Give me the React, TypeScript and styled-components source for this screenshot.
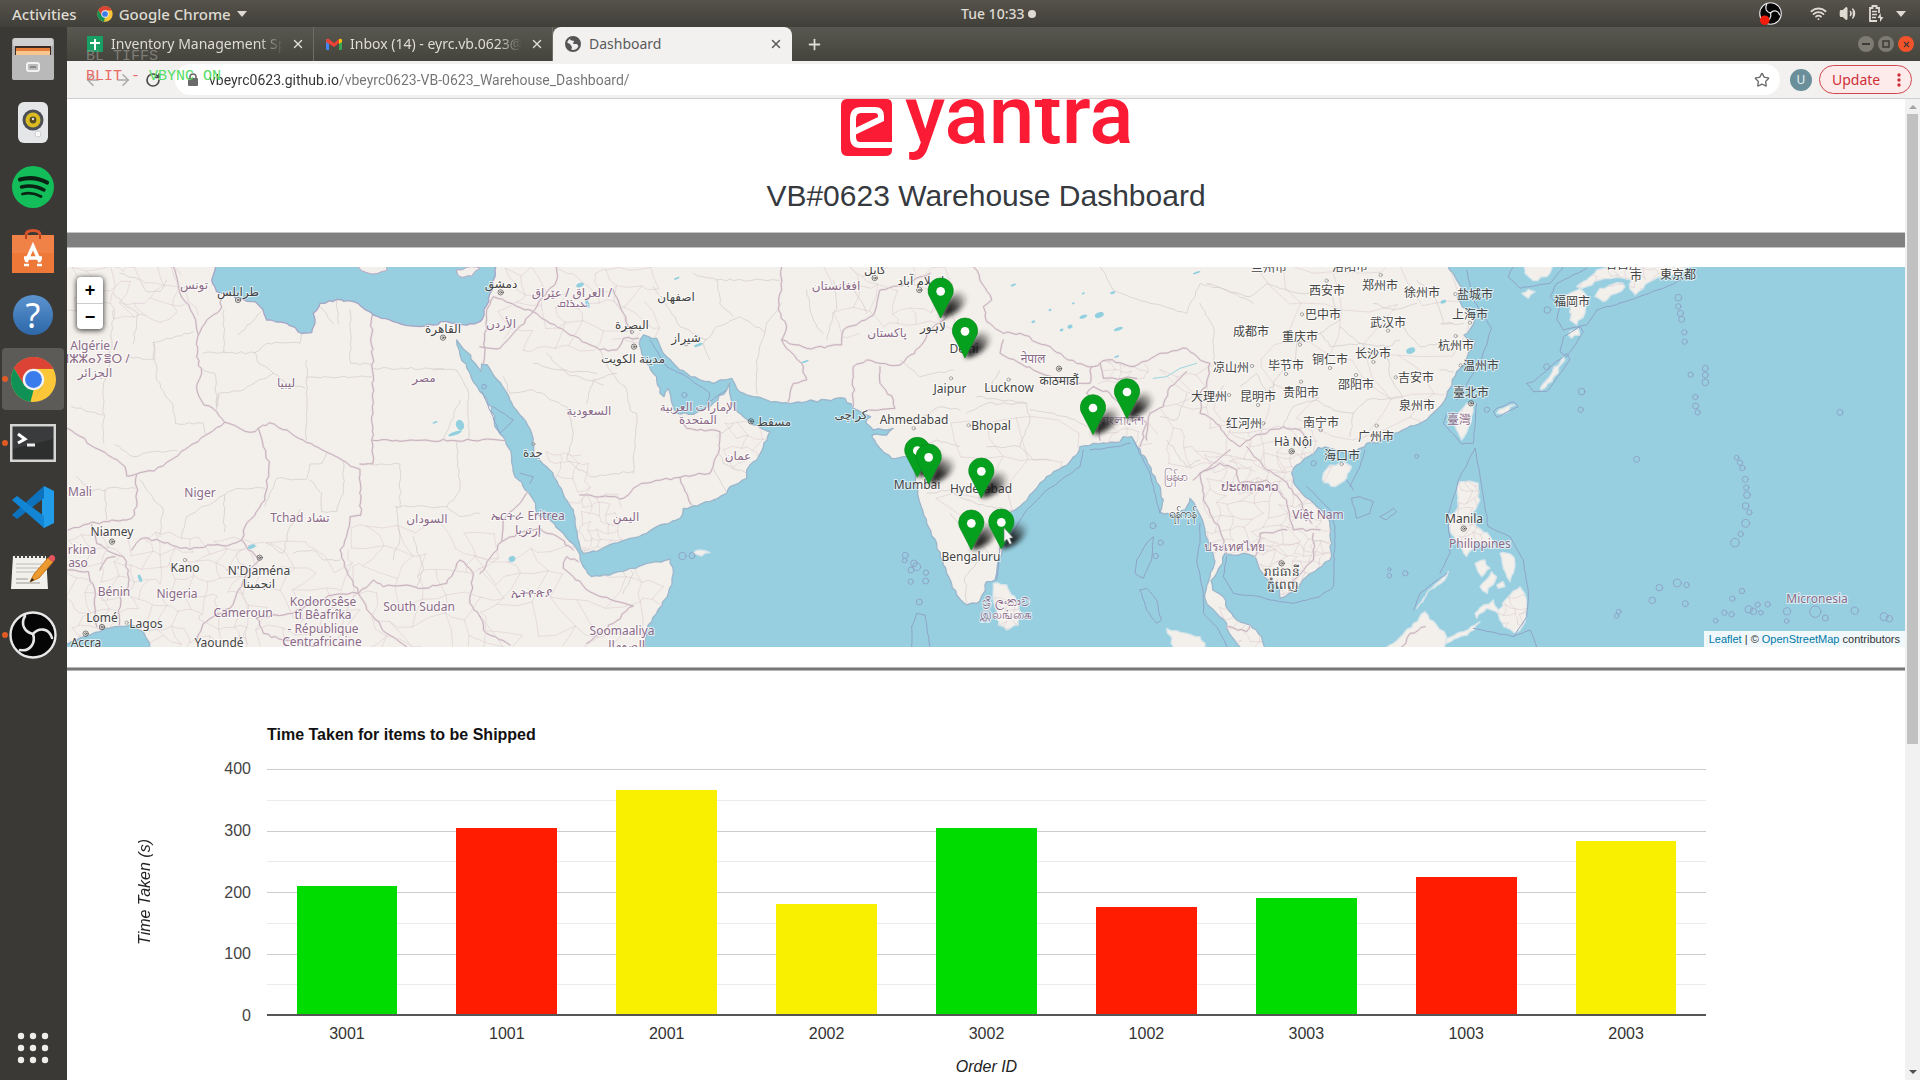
import React from 'react';
import styled, { createGlobalStyle, css } from 'styled-components';
import { RotateCw, ArrowLeft, ArrowRight, Star, X, Plus, Volume2, Wifi } from 'lucide-react';

const GlobalStyle = createGlobalStyle`
  * { box-sizing: border-box; }
  body { margin: 0; background: #fff; font-family: "Liberation Sans", Arial, sans-serif; }
  button { font: inherit; border: 0; padding: 0; background: none; color: inherit; cursor: pointer; }
  svg { display: block; flex: none; }
`;

const uiFont = '"Noto Sans", "Open Sans", sans-serif';

/* ---------- desktop ---------- */

const Desktop = styled.div`
  display: flex;
  flex-direction: column;
  height: 100vh;
  overflow: hidden;
`;

const Panel = styled.header`
  display: flex;
  align-items: center;
  height: 27px;
  flex: none;
  padding-right: 14px;
  background: linear-gradient(#56534b, #403f39);
  color: #dfdbd2;
  font: 500 15px/20px ${uiFont};
`;

const PanelLeft = styled.div`
  display: flex;
  align-items: center;
  gap: 20px;
  width: 50%;
  padding-left: 12px;
`;

const PanelItem = styled.button`
  display: flex;
  align-items: center;
  gap: 6px;
`;

const Clock = styled(PanelItem)`
  gap: 4px;
  padding-left: 8px;
  font-size: 14px;
`;

const PanelStatus = styled.div`
  display: flex;
  align-items: center;
  gap: 12px;
  margin-left: auto;
`;

const RecordingSlot = styled.div`
  margin-right: 16px;
`;

const ClockDot = styled.span`
  width: 8px;
  height: 8px;
  border-radius: 50%;
  background: #dfdbd2;
`;

const Caret = styled.span`
  width: 0;
  border: 5px solid transparent;
  border-top: 6px solid #dfdbd2;
  border-bottom: 0;
`;

const Workspace = styled.div`
  display: flex;
  flex: 1;
  min-height: 0;
`;

const Dock = styled.nav`
  display: flex;
  flex-direction: column;
  width: 67px;
  flex: none;
  background: #3a3936;
`;

const DockButton = styled.button<{ $active?: boolean; $running?: boolean }>`
  display: grid;
  place-items: center;
  position: relative;
  height: 62px;
  margin: 1px 3px 1px 2px;
  border-radius: 4px;
  background: ${p => (p.$active ? '#5c5b58' : 'transparent')};
  ${p => p.$running && css`
    &::before {
      content: '';
      position: absolute;
      left: 0;
      top: 28px;
      width: 6px;
      height: 6px;
      border-radius: 50%;
      background: #e05a26;
    }
  `}
`;

const AppsButton = styled(DockButton)`
  margin-top: auto;
`;

/* ---------- browser ---------- */

const Browser = styled.div`
  display: flex;
  flex-direction: column;
  flex: 1;
  min-width: 0;
  position: relative;
`;

const TabStrip = styled.div`
  display: flex;
  align-items: stretch;
  height: 34px;
  flex: none;
  padding: 0 6px 0 8px;
  background: linear-gradient(#595850, #44433c);
  color: #dedcd5;
  font: 14px/34px ${uiFont};
`;

const Tab = styled.div<{ $active?: boolean }>`
  display: flex;
  align-items: center;
  gap: 8px;
  width: 239px;
  padding: 0 8px 0 12px;
  border-right: 1px solid ${p => (p.$active ? 'transparent' : '#6f6e66')};
  ${p => p.$active && css`
    background: #f2f1f0;
    color: #5a5a5a;
    border-radius: 8px 8px 0 0;
  `}
`;

const TabTitle = styled.button<{ $fade?: boolean }>`
  flex: 1;
  min-width: 0;
  overflow: hidden;
  white-space: nowrap;
  text-align: left;
  ${p => p.$fade && css`mask-image: linear-gradient(90deg, #000 86%, transparent);`}
`;

const NewTab = styled.button`
  display: grid;
  place-items: center;
  width: 44px;
`;

const WindowButtons = styled.div`
  display: flex;
  align-items: center;
  gap: 4px;
  margin-left: auto;
`;

const WindowButton = styled.button<{ $close?: boolean }>`
  display: grid;
  place-items: center;
  width: 16px;
  height: 16px;
  border-radius: 50%;
  color: #3c3b37;
  background: ${p => (p.$close ? '#f2532a' : '#7d7b72')};
`;

const Toolbar = styled.div`
  display: flex;
  align-items: center;
  height: 38px;
  flex: none;
  padding: 0 8px 0 11px;
  background: #f2f1f0;
  border-bottom: 1px solid #cfcfcf;
`;

const NavButton = styled.button<{ $dim?: boolean }>`
  display: grid;
  place-items: center;
  width: 30px;
  height: 28px;
  color: ${p => (p.$dim ? '#a8a8a8' : '#4a4a4a')};
`;

const Omnibox = styled.label`
  display: flex;
  align-items: center;
  gap: 10px;
  flex: 1;
  height: 31px;
  margin: 0 10px 0 7px;
  padding: 0 10px 0 12px;
  border-radius: 16px;
  background: #fff;
  color: #6a6a6a;
`;

const Address = styled.input`
  flex: 1;
  min-width: 0;
  border: 0;
  outline: 0;
  padding: 0;
  color: #666;
  font: 14px/24px Roboto, ${uiFont};
  background: linear-gradient(90deg, #333 0 129px, #737373 129px);
  background-clip: text;
  -webkit-text-fill-color: transparent;
`;

const Avatar = styled.button`
  width: 22px;
  height: 22px;
  border-radius: 50%;
  background: #6a8f9b;
  color: #e8f0f2;
  font: 12px/22px ${uiFont};
`;

const UpdateButton = styled.button`
  display: flex;
  align-items: center;
  justify-content: space-between;
  width: 93px;
  height: 29px;
  margin-left: 7px;
  padding: 0 10px 0 12px;
  border: 1px solid #d0474e;
  border-radius: 15px;
  background: #fcebea;
  color: #cf2f38;
  font: 14px/24px ${uiFont};
`;

const DebugOverlay = styled.div`
  position: absolute;
  left: 19px;
  top: 20px;
  white-space: pre;
  pointer-events: none;
  font: 15px/20px "Liberation Mono", monospace;
`;

const DebugLine = styled.div<{ $color: string }>`
  color: ${p => p.$color};
`;

const DebugGreen = styled.span`
  color: #55dd66;
`;

const Viewport = styled.div`
  display: flex;
  flex: 1;
  min-height: 0;
`;

const Scrollbar = styled.div`
  display: flex;
  flex-direction: column;
  align-items: center;
  justify-content: space-between;
  width: 15px;
  flex: none;
  padding: 6px 0;
  background: #f1f1f1;
`;

const ScrollThumb = styled.div`
  width: 11px;
  flex: 0 0 65%;
  margin: 5px 0 auto;
  background: #c1c1c1;
`;

const ScrollArrow = styled.span<{ $down?: boolean }>`
  width: 0;
  border: 4px solid transparent;
  ${p => (p.$down ? 'border-top-color: #505050; border-bottom: 0;' : 'border-bottom-color: #a3a3a3; border-top: 0;')}
`;

/* ---------- dashboard ---------- */

const Main = styled.main`
  flex: 1;
  min-width: 0;
  overflow: hidden;
  background: #fff;
`;

const PageHead = styled.div`
  display: flex;
  flex-direction: column;
  align-items: center;
`;

const Title = styled.h1`
  margin: 19px 0 16px;
  color: #363a3f;
  font: 400 30px/40px "Liberation Sans", Arial, sans-serif;
`;

const Band = styled.div`
  height: 16px;
  background: #808080;
  border: solid #c4c4c4;
  border-width: 1px 0;
`;

const MapFrame = styled.section`
  position: relative;
  height: 380px;
  margin: 19px 0 20px;
  overflow: hidden;
`;

const MapSvg = styled.svg`
  width: 100%;
  height: 380px;
`;

const ZoomControl = styled.div`
  position: absolute;
  left: 10px;
  top: 10px;
  display: flex;
  flex-direction: column;
  width: 26px;
  border-radius: 4px;
  background: #fff;
  box-shadow: 0 1px 5px 1px rgba(0, 0, 0, 0.65);
`;

const ZoomButton = styled.button`
  height: 26px;
  color: #000;
  font: 700 18px/26px "Liberation Sans", Arial, sans-serif;
  & + & { border-top: 1px solid #ccc; }
`;

const Attribution = styled.div`
  position: absolute;
  right: 0;
  bottom: 0;
  padding: 0 5px;
  background: rgba(255, 255, 255, 0.85);
  color: #333;
  font: 11px/16px "Liberation Sans", Arial, sans-serif;
`;

const MapLink = styled.a`
  color: #0078a8;
  text-decoration: none;
`;

const Rule = styled.hr`
  height: 4px;
  margin: 0;
  border: solid #b5b5b5;
  border-width: 1px 0;
  background: #777;
`;

const ChartCard = styled.section`
  display: grid;
  grid-template-columns: 68px 20px 1fr;
  padding: 54px 199px 0 0;
  font: 16px/20px "Liberation Sans", Arial, sans-serif;
  color: #444;
`;

const ChartTitle = styled.h2`
  grid-column: 3;
  margin: 0 0 24px 112px;
  color: #111;
  font: 700 16px/20px "Liberation Sans", Arial, sans-serif;
`;

const AxisY = styled.div`
  grid-column: 2;
  display: grid;
  place-items: center;
  height: 247px;
  writing-mode: vertical-rl;
  transform: rotate(180deg);
  font-style: italic;
  color: #222;
`;

const Scale = styled.div`
  grid-column: 3;
  display: grid;
  grid-template-columns: 96px 1fr;
  column-gap: 16px;
`;

const Ticks = styled.div`
  grid-area: 1 / 1;
  display: flex;
  flex-direction: column;
  justify-content: space-between;
  margin: -10px 0;
  text-align: right;
`;

const GridLines = styled.div`
  grid-area: 1 / 2;
  display: flex;
  flex-direction: column;
  justify-content: space-between;
  height: 247px;
`;

const GridLine = styled.div<{ $minor?: boolean }>`
  height: 1px;
  background: ${p => (p.$minor ? '#ebebeb' : '#ccc')};
`;

const Bars = styled.div`
  grid-area: 1 / 2;
  display: flex;
  align-items: flex-end;
  height: 247px;
  border-bottom: 2px solid #555;
`;

const BarSlot = styled.div`
  display: flex;
  align-items: flex-end;
  justify-content: center;
  flex: 1;
  height: 100%;
`;

const Bar = styled.div`
  width: 63%;
`;

const Categories = styled.div`
  grid-area: 2 / 2;
  display: flex;
  padding-top: 8px;
`;

const Category = styled.span`
  flex: 1;
  text-align: center;
  color: #333;
`;

const AxisX = styled.div`
  grid-area: 3 / 2;
  padding-top: 13px;
  text-align: center;
  font-style: italic;
  color: #222;
`;

/* ---------- chart data ---------- */

const GREEN = '#00db00';
const RED = '#ff1c00';
const YELLOW = '#f9f000';

const orders = [
  { id: '3001', seconds: 209, color: GREEN },
  { id: '1001', seconds: 303, color: RED },
  { id: '2001', seconds: 366, color: YELLOW },
  { id: '2002', seconds: 180, color: YELLOW },
  { id: '3002', seconds: 304, color: GREEN },
  { id: '1002', seconds: 175, color: RED },
  { id: '3003', seconds: 190, color: GREEN },
  { id: '1003', seconds: 223, color: RED },
  { id: '2003', seconds: 283, color: YELLOW },
];

/* ---------- map data: three units to a pixel ---------- */

type Pt = [number, number];

const parse = (s: string): Pt[] => s.trim().split(/\s+/).map(p => p.split(',').map(Number) as Pt);

const random = (seed: number) => () => {
  seed = (seed * 1664525 + 1013904223) % 4294967296;
  return seed / 4294967296 - 0.5;
};

/* Breaks long segments and nudges the new points, as a surveyed line would wander. */
const wander = (points: string, amount: number, closed = false) => {
  const pts = parse(points);
  const rnd = random(pts[0][0] * 31 + pts[0][1]);
  const out: Pt[] = [];
  const count = closed ? pts.length : pts.length - 1;
  for (let i = 0; i < count; i++) {
    const a = pts[i];
    const b = pts[(i + 1) % pts.length];
    const len = Math.hypot(b[0] - a[0], b[1] - a[1]);
    const n = len > 700 ? 1 : Math.max(1, Math.round(len / 14));
    for (let k = 0; k < n; k++) {
      const t = k / n;
      const j = k === 0 ? 0 : amount;
      out.push([a[0] + (b[0] - a[0]) * t + rnd() * j, a[1] + (b[1] - a[1]) * t + rnd() * j]);
    }
  }
  if (!closed) out.push(pts[pts.length - 1]);
  return 'M' + out.map(p => p.map(v => v.toFixed(0)).join(' ')).join('L') + (closed ? 'Z' : '');
};

/* A net of irregular cells for densely divided countries. */
const cells = (x: number, y: number, w: number, h: number, size: number) => {
  const rnd = random(x + y * 7);
  const cols = Math.ceil(w / size);
  const rows = Math.ceil(h / size);
  const pt: Pt[][] = [];
  for (let r = 0; r <= rows; r++) {
    pt.push([]);
    for (let c = 0; c <= cols; c++) {
      pt[r].push([x + c * size + rnd() * size * 0.7 + (r % 2 ? size / 2 : 0), y + r * size + rnd() * size * 0.7]);
    }
  }
  let d = '';
  const seg = (a: Pt, b: Pt) => {
    const m: Pt = [(a[0] + b[0]) / 2 + rnd() * size * 0.35, (a[1] + b[1]) / 2 + rnd() * size * 0.35];
    d += `M${a[0].toFixed(0)} ${a[1].toFixed(0)}L${m[0].toFixed(0)} ${m[1].toFixed(0)}L${b[0].toFixed(0)} ${b[1].toFixed(0)}`;
  };
  for (let r = 0; r <= rows; r++) {
    for (let c = 0; c <= cols; c++) {
      if (c < cols && (r + c) % 5 !== 4) seg(pt[r][c], pt[r][c + 1]);
      if (r < rows && (r * 3 + c) % 4 !== 3) seg(pt[r][c], pt[r + 1][c]);
    }
  }
  return d;
};

const mainland = `190,0 4335,0 4365,50 4388,95 4372,115 4400,150 4425,175 4412,205 4392,225 4425,245 4402,290 4392,315 4370,335 4356,375 4340,410 4312,448 4270,485 4220,505 4180,520 4140,545 4100,550 4070,575 4030,578 3990,565 3955,562 3925,590 3890,615 3875,640 3880,665 3910,705 3950,740 3980,770 3990,800 3995,850 3990,900 3955,925 3920,950 3890,985 3855,1010 3840,1015 3840,985 3805,960 3780,930 3765,890 3730,880 3695,885 3675,880 3668,910 3650,940 3633,962 3638,990 3670,1010 3685,1050 3710,1080 3750,1095 3785,1130 3797,1175 3730,1175 3695,1130 3680,1090 3650,1060 3620,1030 3615,1000 3630,950 3645,905 3625,860 3615,810 3600,765 3585,735 3570,715 3555,750 3520,765 3480,755 3490,720 3480,680 3455,640 3440,600 3410,560 3395,530 3370,530 3360,545 3320,550 3280,550 3240,560 3230,585 3190,620 3140,650 3110,685 3070,730 3045,750 3015,768 3003,800 3010,860 2995,900 2990,940 2985,960 2960,965 2950,1000 2930,1030 2900,1035 2882,1020 2870,1005 2840,940 2810,850 2780,790 2760,730 2745,670 2750,610 2735,585 2710,590 2675,595 2645,570 2615,530 2622,522 2660,525 2680,505 2650,510 2620,510 2597,488 2612,470 2590,460 2560,445 2535,415 2480,420 2420,425 2360,428 2300,420 2240,405 2210,385 2195,355 2160,360 2140,370 2100,360 2060,340 2030,320 2000,290 1970,235 1930,225 1920,240 1925,280 1940,310 1970,350 1980,400 1992,410 2005,385 2018,435 2030,460 2080,463 2130,440 2180,390 2190,368 2196,430 2212,455 2250,485 2310,515 2290,560 2270,600 2240,630 2240,655 2190,680 2180,700 2130,725 2050,745 2040,775 1980,795 1940,820 1890,835 1840,850 1790,875 1750,880 1740,860 1725,790 1720,750 1695,715 1675,675 1640,620 1605,590 1595,520 1570,475 1540,440 1515,390 1480,345 1462,315 1445,312 1442,335 1425,310 1400,275 1370,240 1380,285 1410,340 1440,395 1475,440 1485,500 1515,540 1535,590 1545,650 1570,680 1600,720 1610,760 1650,780 1690,820 1725,860 1740,885 1750,920 1775,950 1830,945 1880,930 1940,910 2010,897 2020,940 2005,1000 1970,1060 1940,1110 1930,1175 455,1175 430,1115 390,1095 345,1100 300,1115 255,1130 215,1145 190,1150`;

const mediterranean = `650,0 635,60 650,95 710,115 765,125 790,150 800,180 860,190 905,220 935,218 945,190 940,160 960,130 1010,118 1060,125 1120,165 1180,185 1260,200 1300,195 1340,185 1400,195 1440,185 1452,165 1470,100 1485,50 1490,0`;

const islands = [
  '1065,10 1085,32 1120,42 1160,32 1165,10',
  '1370,30 1400,22 1440,25 1415,48 1380,50',
  '2080,880 2100,870 2130,878 2105,888',
  '2980,970 3020,975 3045,1010 3065,1060 3055,1095 3020,1110 2995,1095 2985,1040',
  '3970,640 3990,615 4030,605 4055,620 4040,655 4005,680 3972,668',
  '4425,430 4415,480 4385,540 4365,500 4375,460 4400,430',
  '4380,665 4435,670 4440,720 4415,760 4430,800 4470,830 4485,862 4430,845 4400,890 4380,850 4350,810 4345,765 4370,750 4372,700',
  '4425,910 4455,900 4470,925 4445,950',
  '4440,980 4475,935 4490,950 4462,1000',
  '4500,880 4535,885 4545,920 4530,965 4510,925',
  '4490,975 4510,965 4515,980 4495,985',
  '4425,1060 4450,1035 4480,1020 4495,1050 4520,1015 4560,980 4580,1030 4575,1085 4545,1120 4510,1100 4495,1062 4460,1045 4430,1075',
  '4250,1045 4280,1000 4340,950 4345,935 4270,1015',
  '4340,1150 4410,1115 4440,1085 4390,1115 4325,1140',
  '4150,1175 4180,1150 4240,1090 4275,1055 4310,1095 4340,1130 4330,1175',
  '3500,1105 3560,1120 3600,1130 3625,1175 3530,1175',
  '4570,0 4575,40 4600,62 4640,50 4665,0',
  '4565,100 4585,88 4605,95 4585,115',
  '4730,80 4760,60 4790,30 4840,20 4880,0 5060,0 5050,35 4990,48 4950,65 4930,85 4905,105 4890,88 4895,60 4850,52 4800,60 4760,80',
  '4785,110 4800,85 4850,68 4875,80 4850,100 4810,125',
  '4690,130 4700,105 4740,85 4762,110 4755,160 4730,195 4710,180 4712,140',
  '4705,225 4735,205 4740,225 4715,235',
  '4620,385 4640,360 4690,290 4695,300 4655,365 4625,390',
  '4490,460 4520,440 4545,435 4510,462',
];

const countryBorders = [
  '520,21 540,100 580,165 595,225 590,290 605,340 590,385 612,435 650,455 674,487 750,517 775,505 808,488 1080,628 1082,765',
  '595,225 620,180 660,150 665,115',
  '1117,165 1112,240 1118,290 1118,612 1080,612', '1118,541 1530,541',
  '202,505 300,570 375,620 380,648 462,633 674,487', '775,505 790,560 808,605 795,720 735,800 725,840',
  '410,645 410,740 395,775 310,785 250,795 205,810',
  '395,870 420,838 470,838 530,860 570,868 640,855 680,858 725,840 745,870 780,895 740,940 710,1000 690,1045 640,1070 610,1090 590,1140',
  '275,795 290,850 340,880 370,890 385,930 385,980 360,1010 358,1095', '205,930 265,935 285,990 290,1100',
  '300,930 320,895 345,890', '1082,765 1050,770 1035,840 1020,870 1040,930 1075,1000 1000,1005 930,1030 880,1060 770,1075',
  '770,1075 790,1120 850,1140 950,1161', '1075,1000 1120,960 1150,980 1220,975 1255,985 1340,970 1380,900 1420,940 1410,1030 1440,1070',
  '1075,1000 1110,1060 1160,1120 1220,1161', '1440,1070 1460,1120 1530,1155',
  '1505,845 1510,780 1560,730 1590,690', '1440,940 1480,880 1505,845 1570,815 1620,805 1680,835 1720,870',
  '1735,905 1700,890 1690,925 1720,950 1780,1000 1900,1038 1840,1090 1760,1150', '1440,260 1500,265 1540,220 1600,155 1670,60 1670,21',
  '1600,155 1710,225 1800,270 1850,270 1870,235 1915,235', '1600,155 1480,110 1460,150 1450,310',
  '1740,705 1830,710 1870,715 1925,670 2040,652 2130,640 2155,580 2160,515 2060,505 2040,470', '2040,652 2075,735',
  '1840,90 1870,160 1895,220', '2345,21 2345,90 2335,150 2360,200 2345,240 2420,265 2525,255 2530,210 2620,165 2640,90 2720,70 2790,40',
  '2345,240 2410,320 2420,360 2380,370 2365,425', '2560,440 2560,320 2600,300 2640,310 2700,315 2760,260 2800,200 2840,170',
  '2640,320 2640,370 2680,420 2685,445 2600,450',
  '2920,21 2940,60 2975,120 2950,140 2960,185 3010,220 3060,220 3160,270 3230,310 3280,320 3300,310 3320,300 3400,320 3480,280 3560,265 3600,300 3630,310 3620,380 3600,400 3600,460 3640,480 3690,540 3720,560 3760,530 3850,500 3900,510 3930,560',
  '3010,240 3000,280 3100,330 3200,365 3270,370 3275,320', '3300,310 3310,355 3410,355',
  '3280,380 3260,400 3290,450 3300,540', '3280,380 3330,400 3370,440 3420,470 3440,490 3420,560',
  '3560,335 3510,380 3490,440 3450,460 3440,540', '3600,640 3610,720 3660,810 3680,880',
  '3690,570 3640,610 3600,640 3580,660', '3600,640 3660,610 3710,630 3720,670 3800,660 3860,720 3880,810 3960,810',
  '3740,560 3790,620 3850,660 3900,720 3935,790', '3765,890 3780,820 3860,810', '3890,985 3880,960 3940,900 3940,820',
  '3680,1100 3740,1115 3750,1095', '4205,1161 4230,1120 4275,1100',
];

const provinceBorders = [
  '340,150 330,300 310,380 312,550', '460,247 580,215', '460,247 460,300 385,290', '460,247 470,360 520,440 525,490 610,490 615,520',
  '610,280 765,278 800,250 900,250 905,220', '672,280 672,150', '605,325 645,340 650,440 655,400 730,390 820,340 770,300 765,278',
  '655,405 650,460', '920,300 920,540', '920,352 1115,350', '1050,150 1052,310 1115,312', '1120,325 1330,325', '1405,541 1405,400 1370,330 1300,330',
  '715,225 790,150', '820,340 860,370 915,385', '215,440 310,465', '345,555 400,590 460,575 530,572', '420,660 440,690 490,750 480,830',
  '673,815 673,705 560,770 545,835', '673,705 710,685 795,685', '795,740 830,655 920,658 930,612 965,610 980,580',
  '930,660 965,700 965,755 1010,755 1030,700 1030,605', '1200,740 1200,612 1085,612', '1185,740 1340,740 1380,690 1370,545',
  '1190,740 1200,830 1180,900', '1340,740 1380,770 1440,760', '315,690 320,780', '320,685 410,685', '230,650 270,690 320,690',
  '340,100 380,140 415,160 400,250', '360,40 420,60 440,95 480,95 500,60', '1010,120 1015,190', '960,140 1000,190', '1240,830 1270,930 1250,980',
  '880,880 940,870 970,900 1020,900', '800,850 850,880 870,800 900,750', '1330,540 1380,420', '205,150 240,155',
  '1510,350 1530,400 1600,390 1700,440 1720,520', '1600,310 1680,330 1790,340', '1800,270 1830,330 1880,390 1890,450 1910,460 1900,640',
  '1720,520 1700,600 1770,650 1900,635', '1810,375 1700,340 1640,280', '1850,340 1780,360 1760,430',
  '2130,300 2110,250 2150,200 2220,170 2290,215', '2295,215 2270,300 2270,400', '2080,40 2150,60 2260,60 2345,60', '2345,130 2300,190 2295,215',
  '2150,60 2160,130 2200,170', '1960,80 2010,150 2040,200 2120,240', '2155,580 2170,610 2240,640', '2140,625 2180,700', '2150,530 2200,490',
  '3300,21 3340,90 3450,130 3560,160 3600,70 3680,90 3750,110 3800,70 3900,100 3990,90', '3600,130 3640,200 3640,300',
  '3760,130 3700,100 3620,70', '3720,380 3770,340 3800,400 3850,330', '3950,420 4000,450 4060,460 4100,420 4200,410',
  '4020,200 4080,250 4160,260 4200,240', '3990,90 4020,180 3960,220 3990,260 4080,250', '4120,130 4180,150 4250,130', '4160,260 4170,350 4210,420',
  '4210,200 4260,260 4320,250', '4250,60 4300,100 4330,190 4360,190', '4060,460 4050,530', '3850,500 3880,440 3950,420', '3880,330 3890,250 3960,220',
  '2900,460 2960,430 3080,430 3090,480 3060,560 2960,560', '3090,450 3200,470 3260,500', '3060,560 3100,600 3150,600', '3000,330 2960,400',
  '2770,470 2820,440 2880,450', '2760,560 2810,540 2880,560', '2780,700 2850,690 2900,720 2960,740 3040,750', '2850,760 2900,820 2990,900',
  '2900,1030 2895,950 2940,900', '2700,300 2760,350 2860,330', '2930,410 3000,420 3080,430', '3480,470 3530,480 3560,400', '3500,540 3560,620 3600,600',
  '1870,1000 1900,940 1890,930', '2420,90 2440,180 2470,220', '2500,60 2510,130 2480,240', '2560,80 2600,160', '4320,190 4390,190', '4320,330 4360,335',
];

const seaLimits = [
  '1445,395 1500,520 1540,480 1480,440', '1560,640 1600,650 1590,670', '1950,240 2000,320 2060,350 2130,400 2120,430 2180,390',
  '2990,960 3000,860 3030,830 3080,750 3140,690 3240,620 3250,570', '3400,540 3450,640 3480,760', '3600,790 3600,850 3590,900 3610,1000 3610,1060 3650,1100 3690,1175',
  '3680,890 3670,950 3700,1000 3780,1010 3810,1020 3880,1030 3960,1010 4000,980 4005,800 3990,750 3920,680', '4060,690 4040,660',
  '4095,570 4080,620 4050,680', '4400,30 4420,120 4475,205 4440,310 4370,420', '4340,460 4330,490 4385,552 4420,550 4430,430',
  '4425,565 4380,650 4345,760 4350,880 4320,940', '4425,565 4445,680 4465,800 4530,830 4570,900 4585,1000 4580,1070 4540,1130 4420,1105',
  '4525,50 4560,85 4650,70 4690,21', '4540,21 4525,50', '4690,210 4670,180 4680,140 4650,110 4670,70 4760,25', '4690,210 4760,195 4790,150 4890,120 5000,80 5060,50',
  '3420,990 3440,985 3470,1020 3475,1050 3485,1080 3470,1090 3440,1050 3420,990', '3440,850 3460,830 3455,900 3430,955 3405,940 3410,900 3440,850',
  '2735,1100 2750,1060 2775,1065 2790,1161', '2735,1100 2735,1161', '4055,715 4080,710 4120,725 4110,760 4070,775 4055,715',
  '4140,770 4180,745 4190,755 4160,780 4140,770', '4240,1050 4260,1000 4340,940', '3390,550 3350,560 3270,570', '4540,1130 4590,1110 4610,1161',
  '4580,370 4600,365 4630,340 4700,280 4710,300 4640,395 4600,395 4580,370', '4480,455 4490,445 4540,425 4555,440 4490,472 4480,455',
  '4700,290 4680,275 4690,230 4740,200 4750,215 4700,290',
];

const atolls: [number, number, number][] = [
  [5035, 113, 10], [5035, 139, 8], [5041, 160, 9], [5045, 178, 9], [5053, 217, 8], [5054, 245, 8], [5072, 344, 8], [5116, 325, 9], [5116, 345, 9],
  [5116, 367, 10], [5086, 411, 8], [5087, 438, 9], [5093, 457, 8], [5520, 457, 9], [4745, 395, 10], [4742, 449, 8], [4910, 598, 9],
  [5210, 593, 7], [5220, 608, 8], [5227, 624, 8], [5236, 658, 9], [5239, 683, 8], [5241, 705, 10], [5237, 738, 10], [5248, 757, 8],
  [5237, 790, 12], [5222, 822, 8], [5205, 848, 13], [4978, 983, 10], [4957, 1021, 10], [5032, 969, 12], [5060, 975, 8], [5056, 1031, 9],
  [5147, 1082, 7], [5173, 1058, 8], [5195, 1063, 8], [5197, 1016, 8], [5226, 993, 8], [5246, 1048, 11], [5260, 1054, 10], [5273, 1034, 8],
  [5283, 1058, 7], [5303, 1033, 8], [5361, 1054, 11], [5360, 1083, 7], [5446, 1055, 17], [5476, 1074, 9], [5564, 1052, 11], [5652, 1070, 12], [5668, 1076, 10],
  [4461, 449, 8], [4642, 150, 10], [4640, 320, 9], [3459, 797, 9], [3482, 848, 8], [3467, 888, 8], [2716, 886, 9], [2714, 902, 7], [2742, 910, 10],
  [2750, 920, 12], [2733, 930, 9], [2778, 938, 8], [2777, 963, 9], [2732, 965, 8], [2758, 1026, 9], [2047, 888, 11], [2076, 887, 9], [4250, 589, 6],
  [4168, 928, 5], [4168, 947, 7], [4216, 940, 8], [3941, 610, 8], [4856, 1055, 7], [4850, 1068, 7], [1452, 380, 7], [2053, 405, 8],
];

const nets: [number, number, number, number, number][] = [
  [205, 830, 500, 330, 44], [220, 30, 300, 120, 48], [700, 860, 320, 300, 66], [1040, 800, 420, 360, 70], [1440, 880, 480, 280, 76], [3620, 590, 350, 260, 36],
  [3780, 850, 210, 130, 30], [3700, 510, 230, 100, 40], [1740, 710, 90, 140, 26], [1500, 30, 400, 170, 56], [3300, 310, 120, 50, 26],
  [4370, 670, 80, 170, 26], [4480, 1010, 100, 110, 28], [2480, 30, 320, 130, 60], [3660, 1040, 140, 120, 34], [2180, 480, 100, 130, 44],
  [1640, 580, 90, 130, 36], [3480, 330, 160, 260, 60], [3290, 480, 130, 70, 38], [4690, 20, 370, 60, 30], [2990, 1020, 70, 80, 24], [2840, 500, 340, 240, 95], [3750, 30, 580, 480, 120],
];

const lakes: [number, number, number, number][] = [
  [755, 860, 12, 6], [1380, 495, 12, 16], [1365, 520, 22, 5], [1305, 487, 8, 3], [1536, 897, 10, 9], [1740, 75, 12, 6], [2415, 305, 12, 3], [4232, 272, 14, 9],
  [3298, 165, 14, 8], [3250, 170, 12, 5], [3355, 207, 14, 5], [3210, 200, 8, 6], [3185, 210, 6, 4], [3350, 290, 8, 3], [3100, 185, 6, 4], [3590, 38, 12, 3], [3338, 98, 8, 4],
  [3040, 75, 9, 3], [2095, 255, 14, 4], [2030, 55, 9, 3], [420, 955, 5, 12], [1762, 130, 5, 14], [3150, 150, 5, 3], [3220, 130, 4, 3], [3250, 100, 5, 3], [4330, 125, 9, 5],
];

type Kind = 'country' | 'city';
const labels: [string, number, number, Kind][] = [
  ['تونس', 583, 76, 'country'], ['طرابلس', 714, 95, 'city'], ['القاهرة', 1330, 208, 'city'],
  ['Algérie /', 283, 257, 'country'], ['ⵍⵣⵣⴰⵢⴻⵔ /', 285, 297, 'country'], ['الجزائر', 284, 339, 'country'],
  ['ليبيا', 859, 370, 'country'], ['مصر', 1272, 355, 'country'], ['Mali', 240, 697, 'country'], ['Niger', 601, 698, 'country'],
  ['Tchad تشاد', 900, 774, 'country'], ['السودان', 1280, 776, 'country'], ['Niamey', 336, 816, 'city'],
  ['rkina', 246, 869, 'country'], ['aso', 234, 910, 'country'], ['Kano', 554, 923, 'city'], ["N'Djaména", 777, 933, 'city'], ['انجمينا', 777, 973, 'city'],
  ['Bénin', 342, 996, 'country'], ['Nigeria', 531, 1003, 'country'], ['Cameroun', 729, 1059, 'country'],
  ['Kodorosêse', 970, 1026, 'country'], ['tî Bêafrîka', 970, 1066, 'country'], ['- République', 970, 1106, 'country'], ['Centrafricaine', 967, 1146, 'country'],
  ['South Sudan', 1257, 1042, 'country'], ['Lomé', 305, 1073, 'city'], ['Lagos', 438, 1092, 'city'], ['Accra', 257, 1150, 'city'], ['Yaoundé', 656, 1149, 'city'],
  ['دمشق', 1503, 72, 'city'], ['العراق / عێراق /', 1715, 98, 'country'], ['ܥܝܪܐܩ', 1715, 130, 'country'], ['الأردن', 1504, 191, 'country'],
  ['اصفهان', 2027, 110, 'city'], ['البصرة', 1895, 196, 'city'], ['شيراز', 2058, 233, 'city'], ['مدينة الكويت', 1900, 297, 'city'],
  ['السعودية', 1766, 452, 'country'], ['الإمارات العربية', 2093, 440, 'country'], ['المتحدة', 2094, 480, 'country'], ['مسقط', 2321, 487, 'city'],
  ['عمان', 2215, 588, 'country'], ['جدة', 1600, 580, 'city'], ['اليمن', 1877, 771, 'country'], ['ኤርትራ Eritrea', 1585, 768, 'country'], ['إرتريا', 1585, 810, 'country'],
  ['ኢትዮጵያ', 1594, 999, 'country'], ['Soomaaliya', 1866, 1114, 'country'], ['الصومال', 1873, 1155, 'country'],
  ['كابل', 2624, 30, 'city'], ['اسلام آباد', 2762, 63, 'city'], ['افغانستان', 2509, 77, 'country'], ['پاکستان', 2660, 220, 'country'], ['لاہور', 2800, 202, 'city'],
  ['Delhi', 2893, 267, 'city'], ['Jaipur', 2849, 388, 'city'], ['Lucknow', 3027, 385, 'city'], ['کراچی', 2553, 465, 'city'], ['Ahmedabad', 2741, 481, 'city'],
  ['Bhopal', 2972, 497, 'city'], ['Mumbai', 2752, 674, 'city'], ['Hyderabad', 2942, 686, 'city'], ['Bengaluru', 2914, 891, 'city'],
  ['नेपाल', 3099, 298, 'country'], ['काठमाडौं', 3177, 362, 'city'], ['বাংলাদেশ', 3362, 484, 'country'],
  ['ශ්‍රී ලංකාව', 3017, 1026, 'country'], ['இலங்கை', 3017, 1065, 'country'], ['မြန်မာ', 3524, 650, 'country'], ['ရန်ကုန်', 3546, 762, 'city'],
  ['ປະເທດລາວ', 3750, 680, 'country'], ['ประเทศไทย', 3703, 862, 'country'], ['Việt Nam', 3955, 765, 'country'], ['រាជធានី', 3845, 935, 'city'], ['ភ្នំពេញ', 3845, 974, 'city'],
  ['Hà Nội', 3878, 547, 'city'], ['兰州市', 3807, 24, 'city'], ['洛阳市', 4050, 20, 'city'], ['西安市', 3982, 93, 'city'], ['郑州市', 4141, 77, 'city'], ['徐州市', 4266, 100, 'city'],
  ['盐城市', 4426, 105, 'city'], ['上海市', 4411, 164, 'city'], ['巴中市', 3969, 166, 'city'], ['武汉市', 4164, 190, 'city'], ['成都市', 3753, 215, 'city'],
  ['重庆市', 3900, 230, 'city'], ['杭州市', 4367, 259, 'city'], ['长沙市', 4120, 283, 'city'], ['铜仁市', 3990, 301, 'city'], ['毕节市', 3857, 318, 'city'],
  ['凉山州', 3693, 323, 'city'], ['温州市', 4444, 319, 'city'], ['吉安市', 4249, 353, 'city'], ['邵阳市', 4068, 376, 'city'], ['贵阳市', 3904, 398, 'city'],
  ['大理州', 3626, 410, 'city'], ['昆明市', 3774, 410, 'city'], ['臺北市', 4413, 398, 'city'], ['泉州市', 4252, 437, 'city'], ['臺灣', 4378, 481, 'country'],
  ['红河州', 3731, 493, 'city'], ['南宁市', 3962, 489, 'city'], ['广州市', 4128, 530, 'city'], ['海口市', 4026, 588, 'city'],
  ['福岡市', 4715, 125, 'city'], ['市', 4909, 52, 'city'], ['名古屋', 4870, 16, 'city'], ['東京都', 5034, 44, 'city'],
  ['Manila', 4393, 778, 'city'], ['Philippines', 4441, 853, 'country'], ['Micronesia', 5452, 1017, 'country'],
];

const towns: [number, number, boolean?][] = [
  [714, 120, true], [1329, 233, true], [336, 845, true], [555, 900], [779, 893, true], [306, 1101, true], [257, 1121, true], [380, 1088],
  [1502, 97, true], [1902, 260, true], [1896, 216], [2059, 253], [2253, 484, true], [1600, 552], [2624, 54, true], [2758, 90, true],
  [2853, 355], [2741, 505], [3026, 359], [2906, 496], [3177, 326, true], [3875, 574, true], [3845, 910, true], [3980, 62], [4142, 45], [3906, 163],
  [4164, 212], [3900, 254], [4120, 306], [3990, 324], [3858, 342], [3756, 318], [4382, 316], [4187, 352], [4068, 345], [3903, 365], [3687, 405], [3774, 435],
  [4413, 430, true], [3790, 490], [3962, 510], [4130, 497], [4025, 612], [4391, 806, true], [4410, 188], [4367, 228], [4366, 102],
];

const pins: Pt[] = [[2822, 174], [2895, 294], [3381, 476], [3279, 524], [2752, 652], [2786, 672], [2944, 714], [2914, 870], [3004, 867]];

const WorldMap = () => (
  <MapSvg viewBox="67 267 1838 380" preserveAspectRatio="xMidYMid slice" role="img" aria-label="Map of delivery locations">
    <defs>
      <clipPath id="land">
        <path d={wander(mainland, 8, true)} />
        {islands.map(s => <path key={s} d={wander(s, 8, true)} />)}
      </clipPath>
      <filter id="shade" x="-50%" y="-50%" width="200%" height="200%"><feGaussianBlur stdDeviation="8" /></filter>
      <linearGradient id="cast" x1="0" y1="1" x2="1" y2="0">
        <stop offset="0" stopColor="#000" /><stop offset=".45" stopColor="#111" stopOpacity=".85" /><stop offset="1" stopColor="#222" stopOpacity="0" />
      </linearGradient>
    </defs>
    <rect x="67" y="267" width="1838" height="380" fill="#97cfe0" />
    <g transform="translate(0 260) scale(.333333)" strokeLinejoin="round" strokeLinecap="round">
      <path d={wander(mainland, 8, true)} fill="#f3f0eb" stroke="#9cb6cb" strokeWidth="4" />
      {islands.map(s => <path key={s} d={wander(s, 10, true)} fill="#f3f0eb" stroke="#d6e4ea" strokeWidth="4" />)}
      <g clipPath="url(#land)" fill="none">
        {nets.map(n => <path key={n.join()} d={cells(...n)} stroke="#e0d0d4" strokeWidth="2" />)}
        {provinceBorders.map(s => <path key={s} d={wander(s, 7)} stroke="#d0c8c8" strokeWidth="2" />)}
        {countryBorders.map(s => <path key={s} d={wander(s, 8)} stroke="#ebe0e4" strokeWidth="7" />)}
        {countryBorders.map(s => <path key={s} d={wander(s, 8)} stroke="#c4b0b8" strokeWidth="3" />)}
      </g>
      <path d={wander(mediterranean, 9, true)} fill="#97cfe0" stroke="#a5a6c6" strokeWidth="4" />
      {islands.slice(0, 2).map(s => <path key={s} d={wander(s, 8, true)} fill="#f3f0eb" stroke="#b9a6c2" strokeWidth="3" />)}
      {lakes.map(([x, y, rx, ry]) => <ellipse key={`${x}-${y}`} cx={x} cy={y} rx={rx} ry={ry} fill="#92d0e0" transform={`rotate(-20 ${x} ${y})`} />)}
      <path d="M3460 355L3500 350L3540 325L3590 310" stroke="#9ad4e0" strokeWidth="3" fill="none" />
      {seaLimits.map(s => <path key={s} d={wander(s, 3)} fill="none" stroke="#8fa3c8" strokeWidth="3" />)}
      {atolls.map(([x, y, r]) => <circle key={`${x}-${y}`} cx={x} cy={y} r={r} fill="none" stroke="#8fa3c8" strokeWidth="3" />)}
      {towns.map(([x, y, capital]) => (
        <g key={`${x}-${y}`} fill="none" stroke={capital ? '#444' : '#888'} strokeWidth="2">
          <circle cx={x} cy={y} r={capital ? 8 : 5} />
          {capital && <circle cx={x} cy={y} r="3" />}
        </g>
      ))}
    </g>
    <g textAnchor="middle" paintOrder="stroke" stroke="#fff" strokeOpacity=".65" strokeWidth="2" fontSize="12"
      fontFamily='"Noto Sans", "Noto Sans CJK SC", "DejaVu Sans", sans-serif'>
      {labels.map(([text, x, y, kind]) => (
        <text key={`${text}${x}`} x={Math.round(x / 3)} y={Math.round(y / 3) + 264} fill={kind === 'country' ? '#8b6a88' : '#444'}>{text}</text>
      ))}
    </g>
    <g transform="translate(0 260) scale(.333333)">
      {pins.map(([x, y]) => (
        <path key={`s${x}`} d={`M${x} ${y}C${x + 15} ${y - 45} ${x + 35} ${y - 85} ${x + 65} ${y - 78}C${x + 95} ${y - 60} ${x + 60} ${y - 10} ${x} ${y}Z`} fill="url(#cast)" filter="url(#shade)" />
      ))}
      {pins.map(([x, y]) => (
        <g key={`p${x}`}>
          <path d={`M${x} ${y}L${x - 31} ${y - 60}A38 38 0 1 1 ${x + 31} ${y - 60}Z`} fill="#05a01e" stroke="#078a1b" strokeWidth="2" />
          <circle cx={x} cy={y - 80} r="13" fill="#fff" />
        </g>
      ))}
      <path d="M3012 803V845L3021 838L3029 853L3035 850L3029 835L3039 833Z" fill="#f4f4f4" stroke="#777" strokeWidth="2" />
    </g>
  </MapSvg>
);

/* ---------- icons ---------- */

const ChromeIcon = ({ size }: { size: number }) => (
  <svg width={size} height={size} viewBox="0 0 48 48">
    <circle cx="24" cy="24" r="23" fill="#fbc638" />
    <path d="M24 24L4.1 12.5A23 23 0 0 1 43.9 12.5L44 13H24Z" fill="#dc4334" />
    <path d="M24 13H44A23 23 0 0 0 4.1 12.5L14.5 29.5L24 24Z" fill="#dc4334" />
    <path d="M4.1 12.5L14.5 29.5L24 35L33.5 29.5L23 47A23 23 0 0 1 4.1 12.5Z" fill="#109155" />
    <path d="M24 35L33.5 29.5L23.5 47L21 46.8Z" fill="#fbc638" />
    <circle cx="24" cy="24" r="11" fill="#f2f2f2" />
    <circle cx="24" cy="24" r="8.6" fill="#3b7cec" />
  </svg>
);

const ObsIcon = ({ size, recording }: { size: number; recording?: boolean }) => (
  <svg width={size} height={size} viewBox="0 0 48 48">
    <circle cx="24" cy="24" r="22.5" fill="#050505" stroke="#e8e8e8" strokeWidth="2.4" />
    <g fill="none" stroke="#e6e6e6" strokeWidth="2.6" strokeLinecap="round">
      <path d="M24 23C16 21 11 14 16 5" />
      <path d="M24 23C30 16 40 17 43 27" />
      <path d="M24 23C27 32 21 41 11 39" />
    </g>
    {recording && <circle cx="12" cy="38" r="10" fill="#f21c0d" />}
  </svg>
);

const FilesIcon = () => (
  <svg width="42" height="42" viewBox="0 0 42 42">
    <rect x="0" y="0" width="42" height="42" rx="3" fill="#aeaeae" />
    <rect x="1" y="0" width="40" height="9" rx="3" fill="#cfcfcf" />
    <rect x="3" y="8" width="36" height="9" fill="#3b2c25" />
    <rect x="4" y="10" width="34" height="3" fill="#e77e37" /><rect x="4" y="13" width="34" height="4" fill="#f7c58d" />
    <rect x="0" y="17" width="42" height="25" rx="2" fill="#b9b9b9" />
    <rect x="15" y="25" width="12" height="8" rx="2" fill="#bbb" stroke="#f2f2f2" strokeWidth="2" />
    <rect x="18" y="28" width="6" height="2" fill="#888" />
  </svg>
);

const SpeakerIcon = () => (
  <svg width="42" height="42" viewBox="0 0 42 42">
    <rect x="6" y="0" width="30" height="41" rx="6" fill="#e4e6e8" />
    <circle cx="21" cy="18" r="10.5" fill="#4b4f55" /><circle cx="21" cy="18" r="7.5" fill="#d9bb22" />
    <circle cx="21" cy="18" r="3.4" fill="#554a20" /><circle cx="21" cy="17" r="1.2" fill="#ddd" />
    <circle cx="26" cy="32" r="3" fill="#f8f8f8" stroke="#ccc" />
  </svg>
);

const SpotifyIcon = () => (
  <svg width="42" height="42" viewBox="0 0 42 42">
    <circle cx="21" cy="21" r="21" fill="#13bd59" />
    <g fill="none" stroke="#0b2315" strokeLinecap="round">
      <path d="M8 13.5Q22 9.5 35 16.5" strokeWidth="4.2" /><path d="M9.5 21Q21 18 32 24" strokeWidth="3.5" /><path d="M10.5 28Q20 25.5 29 30.5" strokeWidth="2.8" />
    </g>
  </svg>
);

const SoftwareIcon = () => (
  <svg width="42" height="44" viewBox="0 0 42 44">
    <path d="M14 10V6Q14 1.5 21 1.5T28 6V10" fill="none" stroke="#d9532b" strokeWidth="3" />
    <path d="M0 6H42V44H0Z" fill="#ee7838" /><path d="M0 6H42V24H0Z" fill="#f08248" />
    <path d="M14 10V6M28 10V6" stroke="#b9421f" strokeWidth="2" />
    <g fill="none" stroke="#fff" strokeWidth="3.5"><path d="M14 33L21 17L28 33" /><path d="M12 29H30" /><path d="M12 36H17M25 36H30" strokeWidth="2.5" /></g>
  </svg>
);

const HelpGlyph = styled.span`
  display: grid;
  place-items: center;
  width: 40px;
  height: 40px;
  border-radius: 50%;
  background: linear-gradient(#5b94cf, #2e67a8);
  color: #fff;
  font: 34px/40px "Noto Sans", sans-serif;
`;

const TerminalIcon = () => (
  <svg width="46" height="38" viewBox="0 0 46 38">
    <rect x="1" y="1" width="44" height="36" fill="#2d2f2f" stroke="#d5d5d3" strokeWidth="3" />
    <path d="M3 3H43V15L3 25Z" fill="#45484a" opacity=".5" />
    <path d="M8 10L15 15L8 19" fill="none" stroke="#fff" strokeWidth="3" /><path d="M17 21H25" stroke="#eee" strokeWidth="3" />
  </svg>
);

const CodeIcon = () => (
  <svg width="43" height="42" viewBox="0 0 43 42">
    <path d="M32 0L42 5V37L32 42L30 38V4Z" fill="#219ce8" />
    <path d="M32 0L2 27L0 29L5 33L32 12Z" fill="#0d72bd" />
    <path d="M32 42L0 14L5 10L32 30Z" fill="#1286d4" />
  </svg>
);

const NotesIcon = () => (
  <svg width="46" height="36" viewBox="0 0 46 36">
    <path d="M3 3H36L38 36H1Z" fill="#f1f0ea" />
    <path d="M5 3H35" stroke="#444" strokeWidth="4" strokeDasharray="2 2" />
    <g stroke="#bcbcb8"><path d="M6 11H32M6 15H29M6 19H26" /><path d="M6 26H18M6 30H30" stroke="#999" /></g>
    <path d="M20 29L24 21L38 5L43 9L29 25Z" fill="#eb9a30" stroke="#c6761b" />
    <path d="M38 5L41 2Q46 2 45 7L43 9Z" fill="#e4555e" /><path d="M20 29L22 25L24 27Z" fill="#222" />
  </svg>
);

const AppsIcon = () => (
  <svg width="32" height="32" viewBox="0 0 32 32" fill="#eeeeec">
    {[4, 16, 28].map(x => [4, 16, 28].map(y => <circle key={`${x}${y}`} cx={x} cy={y} r="3.2" />))}
  </svg>
);

const BatteryIcon = () => (
  <svg width="16" height="18" viewBox="0 0 16 18" fill="none" stroke="#dfdbd2">
    <path d="M9 16H2V3H4.5V1H8.5V3H11V8" strokeWidth="1.8" />
    <path d="M4 6.5H9M4 9.5H9M4 12.5H8" strokeWidth="1.6" />
    <path d="M12.5 8L9.5 13H12V17L15.5 12H13Z" fill="#dfdbd2" stroke="none" />
  </svg>
);

const LockIcon = () => (
  <svg width="12" height="14" viewBox="0 0 12 14">
    <path d="M3 7V4Q3 1 6 1T9 4V7" fill="none" stroke="#6a6a6a" strokeWidth="1.6" />
    <rect x="1" y="5" width="10" height="8" rx="1" fill="#6a6a6a" />
  </svg>
);

const SheetsIcon = () => (
  <svg width="16" height="16" viewBox="0 0 16 16"><rect width="16" height="16" rx="1" fill="#18a064" /><path d="M8 3V14M3 7H13" stroke="#fff" strokeWidth="2" /></svg>
);

const MailIcon = () => (
  <svg width="16" height="13" viewBox="0 0 16 13">
    <path d="M0 1H3V12H1Q0 12 0 11Z" fill="#4285f4" /><path d="M13 1H16V11Q16 12 15 12H13Z" fill="#34a853" />
    <path d="M0 2Q1 0 3 1L8 5L13 1V5L8 9L0 4Z" fill="#ea4335" /><path d="M13 1Q15 0 16 2V4L13 6Z" fill="#fbbc04" />
  </svg>
);

const GlobeIcon = () => (
  <svg width="16" height="16" viewBox="0 0 16 16">
    <circle cx="8" cy="8" r="7" fill="#eee" stroke="#555" strokeWidth="2" />
    <path d="M1 6L5 8L7 11L6 15L2 12ZM6 1L5 4L9 5L8 8L12 8L14 11L15 7L12 2Z" fill="#555" />
  </svg>
);

const LogoWord = styled.text`
  font: 500 82px Roboto, sans-serif;
  fill: #fb1b35;
`;

const Logo = () => (
  <svg width="290" height="58" viewBox="0 0 290 58" overflow="visible" role="img" aria-label="e-Yantra">
    <path d="M6 0H46Q51 0 51 6V51Q51 57 44 57H6Q0 57 0 50V7Q0 0 6 0Z" fill="#fb1b35" />
    <path d="M52 46H19Q12 46 12 38V20Q12 11 20 11H34Q40 11 40 17V20L13 33" fill="none" stroke="#fff" strokeWidth="6" />
    <LogoWord x="64" y="44">yantra</LogoWord>
  </svg>
);

/* ---------- page ---------- */

const Chart = () => (
  <ChartCard>
    <ChartTitle>Time Taken for items to be Shipped</ChartTitle>
    <AxisY>Time Taken (s)</AxisY>
    <Scale>
      <Ticks>{[400, 300, 200, 100, 0].map(n => <span key={n}>{n}</span>)}</Ticks>
      <GridLines>{[0, 1, 2, 3, 4, 5, 6, 7, 8].map(n => <GridLine key={n} $minor={n % 2 === 1} />)}</GridLines>
      <Bars>
        {orders.map(o => (
          <BarSlot key={o.id}><Bar style={{ height: `${o.seconds / 4}%`, background: o.color }} /></BarSlot>
        ))}
      </Bars>
      <Categories>{orders.map(o => <Category key={o.id}>{o.id}</Category>)}</Categories>
      <AxisX>Order ID</AxisX>
    </Scale>
  </ChartCard>
);

export default function App() {
  return (
    <Desktop>
      <GlobalStyle />
      <Panel>
        <PanelLeft>
          <PanelItem>Activities</PanelItem>
          <PanelItem><ChromeIcon size={16} />Google Chrome<Caret /></PanelItem>
        </PanelLeft>
        <Clock>Tue 10:33<ClockDot /></Clock>
        <PanelStatus>
          <RecordingSlot><ObsIcon size={23} recording /></RecordingSlot>
          <Wifi size={17} strokeWidth={2.6} />
          <Volume2 size={17} fill="#dfdbd2" />
          <BatteryIcon />
          <Caret />
        </PanelStatus>
      </Panel>
      <Workspace>
        <Dock>
          <DockButton aria-label="Files"><FilesIcon /></DockButton>
          <DockButton aria-label="Rhythmbox"><SpeakerIcon /></DockButton>
          <DockButton aria-label="Spotify"><SpotifyIcon /></DockButton>
          <DockButton aria-label="Ubuntu Software"><SoftwareIcon /></DockButton>
          <DockButton aria-label="Help"><HelpGlyph>?</HelpGlyph></DockButton>
          <DockButton aria-label="Google Chrome" $active $running><ChromeIcon size={47} /></DockButton>
          <DockButton aria-label="Terminal" $running><TerminalIcon /></DockButton>
          <DockButton aria-label="Visual Studio Code"><CodeIcon /></DockButton>
          <DockButton aria-label="Text Editor"><NotesIcon /></DockButton>
          <DockButton aria-label="OBS Studio" $running><ObsIcon size={48} /></DockButton>
          <AppsButton aria-label="Show Applications"><AppsIcon /></AppsButton>
        </Dock>
        <Browser>
          <TabStrip>
            <Tab><SheetsIcon /><TabTitle $fade>Inventory Management Sp</TabTitle><button aria-label="Close tab"><X size={14} strokeWidth={2.5} /></button></Tab>
            <Tab><MailIcon /><TabTitle $fade>Inbox (14) - eyrc.vb.0623@</TabTitle><button aria-label="Close tab"><X size={14} strokeWidth={2.5} /></button></Tab>
            <Tab $active><GlobeIcon /><TabTitle>Dashboard</TabTitle><button aria-label="Close tab"><X size={14} strokeWidth={2.5} /></button></Tab>
            <NewTab aria-label="New tab"><Plus size={17} strokeWidth={2.5} /></NewTab>
            <WindowButtons>
              <WindowButton aria-label="Minimize"><svg width="8" height="8"><path d="M0 4H8" stroke="currentColor" strokeWidth="2" /></svg></WindowButton>
              <WindowButton aria-label="Restore"><svg width="8" height="8"><rect x="1" y="1" width="6" height="6" fill="none" stroke="currentColor" strokeWidth="1.5" /></svg></WindowButton>
              <WindowButton aria-label="Close window" $close><X size={9} strokeWidth={3} /></WindowButton>
            </WindowButtons>
          </TabStrip>
          <Toolbar>
            <NavButton $dim aria-label="Back"><ArrowLeft size={18} /></NavButton>
            <NavButton $dim aria-label="Forward"><ArrowRight size={18} /></NavButton>
            <NavButton aria-label="Reload"><RotateCw size={16} strokeWidth={2.5} /></NavButton>
            <Omnibox>
              <LockIcon />
              <Address aria-label="Address" defaultValue="vbeyrc0623.github.io/vbeyrc0623-VB-0623_Warehouse_Dashboard/" />
              <Star size={16} />
            </Omnibox>
            <Avatar>U</Avatar>
            <UpdateButton>
              Update
              <svg width="4" height="16" fill="#cf2f38"><circle cx="2" cy="3" r="1.7" /><circle cx="2" cy="8" r="1.7" /><circle cx="2" cy="13" r="1.7" /></svg>
            </UpdateButton>
          </Toolbar>
          <Viewport>
            <Main>
              <PageHead>
                <Logo />
                <Title>VB#0623 Warehouse Dashboard</Title>
              </PageHead>
              <Band />
              <MapFrame>
                <WorldMap />
                <ZoomControl>
                  <ZoomButton aria-label="Zoom in">+</ZoomButton>
                  <ZoomButton aria-label="Zoom out">−</ZoomButton>
                </ZoomControl>
                <Attribution>
                  <MapLink href="#leaflet">Leaflet</MapLink> | © <MapLink href="#osm">OpenStreetMap</MapLink> contributors
                </Attribution>
              </MapFrame>
              <Rule />
              <Chart />
            </Main>
            <Scrollbar><ScrollArrow /><ScrollThumb /><ScrollArrow $down /></Scrollbar>
          </Viewport>
          <DebugOverlay>
            <DebugLine $color="rgba(150, 150, 145, 0.7)">BL TIFFS</DebugLine>
            <DebugLine $color="#ea6a64">BLIT - <DebugGreen>VBYNC ON</DebugGreen></DebugLine>
          </DebugOverlay>
        </Browser>
      </Workspace>
    </Desktop>
  );
}
